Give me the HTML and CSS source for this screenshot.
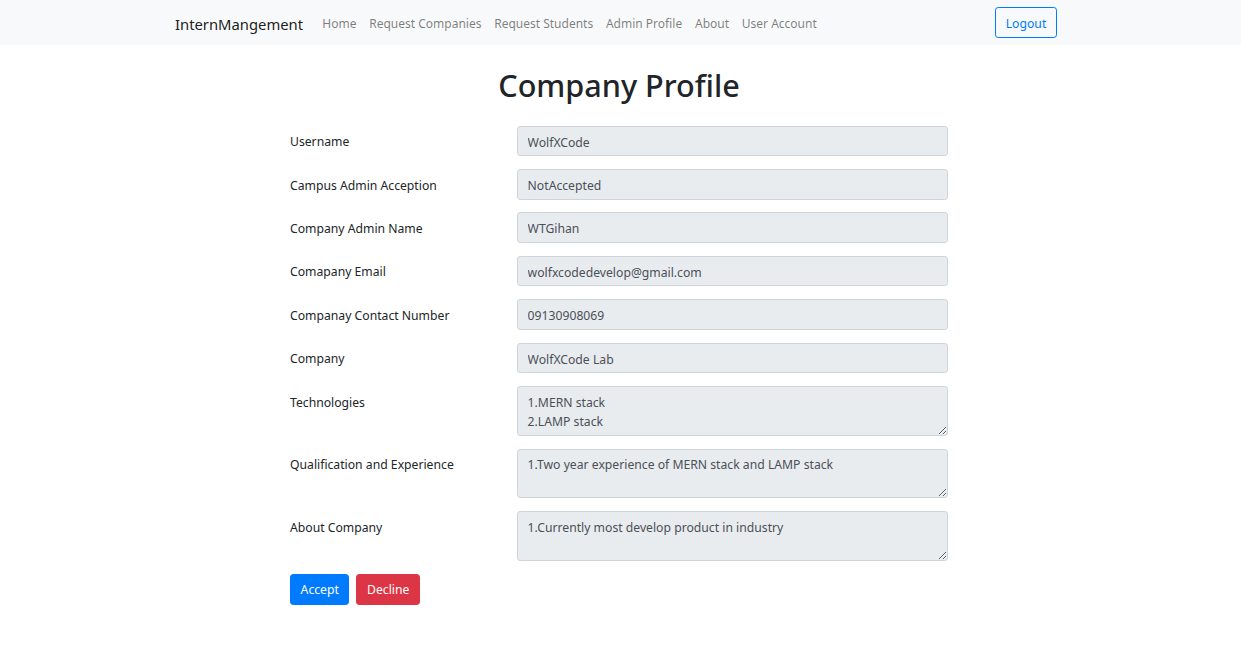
FILE: index.html
```html
<!DOCTYPE html>
<html lang="en">
<head>
<meta charset="utf-8">
<title>Company Profile</title>
<link rel="stylesheet" href="styles.css">
</head>
<body>
<nav class="navbar">
  <a class="brand" href="#">InternMangement</a>
  <ul class="nav-links">
    <li><a href="#">Home</a></li>
    <li><a href="#">Request Companies</a></li>
    <li><a href="#">Request Students</a></li>
    <li><a href="#">Admin Profile</a></li>
    <li><a href="#">About</a></li>
    <li><a href="#">User Account</a></li>
  </ul>
  <button class="btn btn-outline">Logout</button>
</nav>
<main class="page">
  <h1 class="title">Company Profile</h1>
  <form class="profile-form">
    <div class="form-row">
      <label class="form-label">Username</label>
      <div class="form-field"><input class="form-control" type="text" value="WolfXCode" readonly></div>
    </div>
    <div class="form-row">
      <label class="form-label">Campus Admin Acception</label>
      <div class="form-field"><input class="form-control" type="text" value="NotAccepted" readonly></div>
    </div>
    <div class="form-row">
      <label class="form-label">Company Admin Name</label>
      <div class="form-field"><input class="form-control" type="text" value="WTGihan" readonly></div>
    </div>
    <div class="form-row">
      <label class="form-label">Comapany Email</label>
      <div class="form-field"><input class="form-control" type="text" value="wolfxcodedevelop@gmail.com" readonly></div>
    </div>
    <div class="form-row">
      <label class="form-label">Companay Contact Number</label>
      <div class="form-field"><input class="form-control" type="text" value="09130908069" readonly></div>
    </div>
    <div class="form-row">
      <label class="form-label">Company</label>
      <div class="form-field"><input class="form-control" type="text" value="WolfXCode Lab" readonly></div>
    </div>
    <div class="form-row">
      <label class="form-label">Technologies</label>
      <div class="form-field"><textarea class="form-control textarea" rows="2" readonly>1.MERN stack
2.LAMP stack</textarea></div>
    </div>
    <div class="form-row">
      <label class="form-label">Qualification and Experience</label>
      <div class="form-field"><textarea class="form-control textarea" rows="2" readonly>1.Two year experience of MERN stack and LAMP stack</textarea></div>
    </div>
    <div class="form-row">
      <label class="form-label">About Company</label>
      <div class="form-field"><textarea class="form-control textarea" rows="2" readonly>1.Currently most develop product in industry</textarea></div>
    </div>
    <div class="actions">
      <button type="button" class="btn btn-primary">Accept</button>
      <button type="button" class="btn btn-danger">Decline</button>
    </div>
  </form>
</main>
</body>
</html>
```
FILE: styles.css
```css
* { box-sizing: border-box; }

html, body {
  margin: 0;
  padding: 0;
  background: #fff;
  font-family: "Noto Sans", "Open Sans", sans-serif;
  font-size: 12.2px;
  line-height: 19.2px;
  color: #212529;
}

.navbar {
  display: flex;
  align-items: center;
  height: 45px;
  background: #f8f9fa;
  padding: 0 184px 0 175px;
}

.brand {
  font-size: 14.8px;
  color: rgba(0, 0, 0, 0.9);
  text-decoration: none;
  margin-right: 12.8px;
  line-height: 24px;
  padding-top: 2px;
}

.nav-links {
  display: flex;
  list-style: none;
  margin: 0;
  padding: 2px 0 0;
  flex: 1;
}

.nav-links a {
  display: block;
  padding: 6.4px 6.4px;
  font-size: 12px;
  color: rgba(0, 0, 0, 0.5);
  text-decoration: none;
}

.btn {
  font-family: inherit;
  font-size: 12.2px;
  line-height: 19.2px;
  padding: 5.4px 9.6px 4.2px;
  border: 1px solid transparent;
  border-radius: 3.2px;
  height: 31px;
  cursor: pointer;
}

.btn-outline {
  background: transparent;
  color: #007bff;
  border-color: #007bff;
  width: 62px;
}

.btn-primary {
  background: #007bff;
  border-color: #007bff;
  color: #fff;
}

.btn-danger {
  background: #dc3545;
  border-color: #dc3545;
  color: #fff;
}

.page {
  width: 658px;
  margin: 0 0 0 290px;
}

.title {
  margin: 22px 0 22px;
  font-size: 30.6px;
  font-weight: 500;
  line-height: 1.2;
  text-align: center;
}

.profile-form {
  display: flex;
  flex-direction: column;
}

.form-row {
  display: flex;
  margin-bottom: 12.8px;
}

.form-label {
  width: 227px;
  flex: none;
  padding-top: 6.5px;
}

.form-field {
  flex: 1;
}

.form-control {
  display: block;
  width: 100%;
  height: 30.6px;
  padding: 6px 9.6px 3.6px;
  font-family: inherit;
  font-size: 12.2px;
  line-height: 19.2px;
  color: #495057;
  background: #e9ecef;
  border: 1px solid #ced4da;
  border-radius: 3.2px;
  outline: none;
}

.textarea {
  height: 49.7px;
  padding-top: 5.6px;
  resize: vertical;
}

.actions {
  display: flex;
  gap: 7px;
}
```
